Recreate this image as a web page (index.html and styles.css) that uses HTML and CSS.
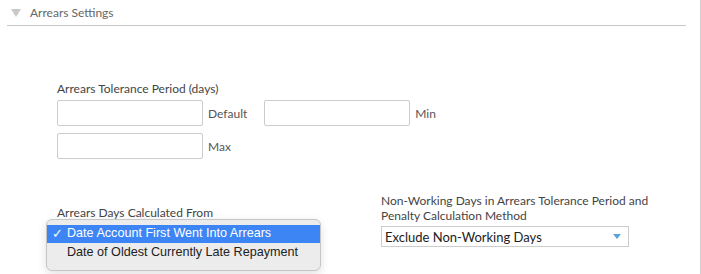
FILE: index.html
```html
<!DOCTYPE html>
<html>
<head>
<meta charset="utf-8">
<link rel="stylesheet" href="styles.css">
</head>
<body>
<div class="page">
  <div class="section-header">
    <span class="caret"></span>
    <span class="title">Arrears Settings</span>
  </div>
  <div class="section-body">
    <div class="field">
      <div class="label">Arrears Tolerance Period (days)</div>
      <div class="inputs">
        <div class="pair"><input class="text" type="text"><span class="suffix">Default</span></div>
        <div class="pair"><input class="text" type="text"><span class="suffix">Min</span></div>
        <div class="pair"><input class="text" type="text"><span class="suffix">Max</span></div>
      </div>
    </div>
    <div class="row">
      <div class="field col-left">
        <div class="label">Arrears Days Calculated From</div>
        <div class="select-wrap">
          <div class="select covered"><span class="select-text">Date Account First Went Into Arrears</span><span class="arrow"></span></div>
          <div class="menu">
            <div class="menu-item selected"><span class="check">✓</span>Date Account First Went Into Arrears</div>
            <div class="menu-item"><span class="check"></span>Date of Oldest Currently Late Repayment</div>
          </div>
        </div>
      </div>
      <div class="field col-right">
        <div class="label two-line">Non-Working Days in Arrears Tolerance Period and<br>Penalty Calculation Method</div>
        <div class="select wide"><span class="select-text">Exclude Non-Working Days</span><span class="arrow"></span></div>
      </div>
    </div>
  </div>
</div>
</body>
</html>
```
FILE: styles.css
```css
html, body {
  margin: 0;
  padding: 0;
  background: #fff;
}
.page {
  width: 700px;
  height: 274px;
  border-right: 1px solid #cfcfcf;
  font-family: Lato, "Open Sans", sans-serif;
  color: #333;
  overflow: hidden;
}
.section-header {
  margin: 0 14px 0 7px;
  height: 25px;
  border-bottom: 1px solid #c8c8c8;
  display: flex;
  align-items: center;
}
.caret {
  width: 0;
  height: 0;
  margin-left: 4px;
  border-left: 5.5px solid transparent;
  border-right: 5.5px solid transparent;
  border-top: 8px solid #c9c9c9;
  margin-top: 1px;
}
.title {
  margin-left: 9px;
  font-size: 12px;
  color: #666;
}
.section-body {
  padding: 55px 0 0 57px;
}
.label {
  font-size: 12px;
  line-height: 16px;
  color: #444;
  margin-bottom: 3px;
}
.inputs {
  display: grid;
  grid-template-columns: auto auto;
  justify-content: start;
  column-gap: 17px;
  row-gap: 7px;
}
.pair {
  display: flex;
  align-items: center;
}
.text {
  box-sizing: border-box;
  width: 146px;
  height: 26px;
  border: 1px solid #ccc;
  border-radius: 2px;
  margin: 0;
  padding: 0 4px;
  font: inherit;
}
.suffix {
  margin-left: 5px;
  font-size: 12px;
  color: #555;
}
.row {
  display: flex;
  align-items: flex-end;
  margin-top: 35px;
}
.col-left {
  width: 324px;
}
.col-left .label {
  margin-bottom: 6px;
  line-height: 15px;
}
.two-line {
  line-height: 14.5px;
  margin-bottom: 3px;
}
.select-wrap {
  position: relative;
}
.select {
  box-sizing: border-box;
  width: 248px;
  height: 21px;
  border: 1px solid #ccc;
  background: #fff;
  display: flex;
  align-items: center;
  justify-content: space-between;
  padding: 0 7px 0 3px;
  font-size: 13px;
  color: #222;
}
.covered .select-text {
  visibility: hidden;
}
.arrow {
  width: 0;
  height: 0;
  border-left: 4.5px solid transparent;
  border-right: 4.5px solid transparent;
  border-top: 5px solid #5aa2da;
}
.menu {
  position: absolute;
  left: -11px;
  top: -7px;
  width: 275px;
  height: 52px;
  box-sizing: border-box;
  padding-top: 5px;
  background: #ececec;
  border: 1px solid #c6c6c6;
  border-radius: 6px;
  box-shadow: 0 3px 10px rgba(0,0,0,0.12);
  font-family: "Liberation Sans", Arial, sans-serif;
  font-size: 12.6px;
  color: #222;
}
.menu-item {
  height: 17.5px;
  line-height: 17.5px;
  display: flex;
  align-items: center;
  white-space: nowrap;
}
.menu-item + .menu-item {
  margin-top: 1px;
}
.menu-item.selected {
  background: #3d85f5;
  color: #fff;
}
.check {
  width: 20px;
  padding-left: 5px;
  box-sizing: border-box;
  flex: none;
  font-family: "DejaVu Sans", sans-serif;
  font-size: 13px;
}
```
